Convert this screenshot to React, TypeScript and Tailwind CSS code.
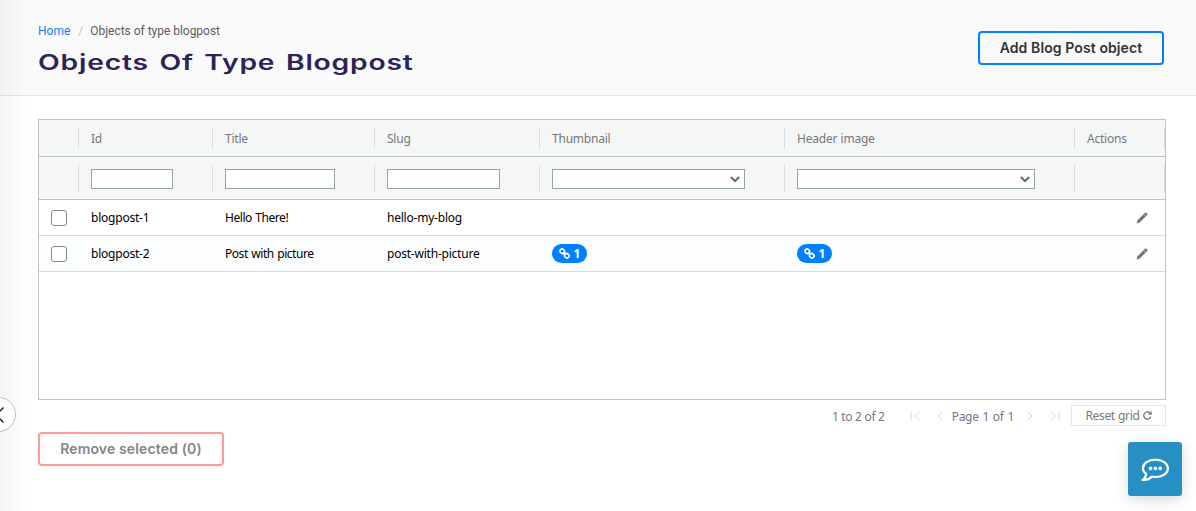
import React from "react";

type Column = { label: string; cell: string; filter?: string; select?: boolean };

const columns: Column[] = [
  { label: "", cell: "w-[40px]" },
  { label: "Id", cell: "w-[134px]", filter: "w-[82px]" },
  { label: "Title", cell: "w-[162px]", filter: "w-[110px]" },
  { label: "Slug", cell: "w-[165px]", filter: "w-[113px]" },
  { label: "Thumbnail", cell: "w-[245px]", filter: "w-[193px]", select: true },
  { label: "Header image", cell: "w-[290px]", filter: "w-[238px]", select: true },
  { label: "Actions", cell: "w-[90px]" },
];

const rows = [
  { id: "blogpost-1", title: "Hello There!", slug: "hello-my-blog", images: 0 },
  { id: "blogpost-2", title: "Post with picture", slug: "post-with-picture", images: 1 },
];

function Chevron({ d, className }: { d: string; className: string }) {
  return (
    <svg className={className} viewBox="0 0 10 10" fill="none" stroke="currentColor">
      <path d={d} />
    </svg>
  );
}

function Badge({ count }: { count: number }) {
  return (
    <span className="flex h-[19px] w-[35px] items-center justify-center gap-[4px] rounded-full bg-[#0080ff] text-[12px] font-bold tracking-normal text-white">
      <svg className="h-[11px] w-[11px]" viewBox="0 0 12 12" fill="none" stroke="currentColor" strokeWidth="1.8">
        <rect x="1" y="1.4" width="5.2" height="4.4" rx="2" transform="rotate(45 3.6 3.6)" />
        <rect x="5.8" y="6.2" width="5.2" height="4.4" rx="2" transform="rotate(45 8.4 8.4)" />
        <path d="M4.4 4.4l3.2 3.2" />
      </svg>
      {count}
    </span>
  );
}

export default function App() {
  return (
    <div className="relative h-[511px] w-full overflow-hidden bg-white font-['Noto_Sans',sans-serif] text-[12px]">
      <header className="flex h-24 items-start justify-between border-b border-[#e5e6e8] bg-[#fafafa] pr-8 pl-[38px]">
        <div className="pt-[22px]">
          <nav className="flex h-[18px] items-center font-['Roboto',sans-serif] text-[12px] text-[#5c5c5c]">
            <a className="text-[#0d80ff]">Home</a>
            <span className="mr-[7px] ml-[8px] text-[#c4c4c4]">/</span>
            <span className="tracking-[-0.02px]">Objects of type blogpost</span>
          </nav>
          <h1 className="mt-[8px] origin-left scale-x-[1.345] font-['Inter',sans-serif] text-[21px] leading-[30px] font-semibold tracking-[0.6px] whitespace-nowrap text-[#2b2459] [word-spacing:2px]">
            Objects Of Type Blogpost
          </h1>
        </div>
        <button className="mt-[31px] h-[34px] w-[186px] rounded-[4px] border-2 border-[#0080ff] pb-[2px] font-['Inter',sans-serif] text-[14px] font-semibold tracking-[0.1px] text-[#333]">
          Add Blog Post object
        </button>
      </header>

      <main className="pt-[23px] pr-[30px] pl-[38px]">
        <section className="h-[281px] border border-[#bdc3c7]">
          <div className="flex h-[37px] border-b border-[#bdc3c7] bg-[#f5f7f7] tracking-[-0.22px] text-[#757778] [word-spacing:0.5px]">
            {columns.map((c, i) => (
              <div key={i} className={`flex items-center justify-between pl-3 ${c.cell}`}>
                <span className="pt-[2px] whitespace-nowrap">{c.label}</span>
                <i className="h-5 w-px bg-[#d8dbdd]" />
              </div>
            ))}
          </div>
          <div className="flex h-[43px] border-b border-[#bdc3c7] bg-[#f5f7f7]">
            {columns.map((c, i) => (
              <div key={i} className={`flex items-center justify-between pl-3 ${c.cell}`}>
                {c.filter ? (
                  <div className={`mt-px flex h-5 items-center justify-end border border-[#95a5a6] bg-white pr-1 ${c.filter}`}>
                    {c.select && (
                      <Chevron d="M0.8 3l4.2 4 4.2-4" className="h-[10px] w-[10px] stroke-2 text-[#6b6b6b]" />
                    )}
                  </div>
                ) : (
                  <span />
                )}
                <i className="h-[27px] w-px bg-[#d8dbdd]" />
              </div>
            ))}
          </div>
          {rows.map((r, i) => (
            <div key={r.id} className={`flex h-9 items-center border-b border-[#d9dcde] tracking-[-0.22px] text-black ${i ? "bg-[#fcfdfe]" : "bg-white"}`}>
              <div className="w-[40px] pl-3">
                <div className="h-4 w-4 rounded-[3px] border border-[#7f8c8d] bg-white" />
              </div>
              <div className="w-[134px] pt-px pl-3">{r.id}</div>
              <div className="w-[162px] pt-px pl-3 tracking-[-0.45px] [word-spacing:0.8px]">{r.title}</div>
              <div className="w-[165px] pt-px pl-3">{r.slug}</div>
              <div className="w-[245px] pl-3">{r.images > 0 && <Badge count={r.images} />}</div>
              <div className="w-[290px] pl-3">{r.images > 0 && <Badge count={r.images} />}</div>
              <div className="flex w-[90px] justify-end pr-[17px]">
                <svg className="h-3 w-3 text-[#757575]" viewBox="0 0 12 12" fill="currentColor">
                  <path d="M.6 11.4l.9-3.1 6-6 2.2 2.2-6 6zM7.7 2.1l1.3-1.3q.7-.6 1.4 0l.8.8q.6.7 0 1.4l-1.3 1.3z" />
                </svg>
              </div>
            </div>
          ))}
        </section>

        <div className="flex h-8 items-center justify-end text-[#757778]">
          <span className="mr-[25px] pt-[2px] tracking-[-0.3px]">1 to 2 of 2</span>
          <Chevron d="M1 1v8M9 1L5 5l4 4" className="mr-[15px] h-[10px] w-[10px] text-[#d5d7d8]" />
          <Chevron d="M7 1L3 5l4 4" className="mr-[7px] h-[10px] w-[10px] text-[#d5d7d8]" />
          <span className="pt-[2px] tracking-[-0.3px] [word-spacing:1px]">Page 1 of 1</span>
          <Chevron d="M3 1l4 4-4 4" className="mr-[15px] ml-[11px] h-[10px] w-[10px] text-[#d5d7d8]" />
          <Chevron d="M1 1l4 4-4 4M9 1v8" className="mr-[11px] h-[10px] w-[10px] text-[#d5d7d8]" />
          <button className="-mt-px flex h-[21px] w-[95px] items-center justify-center gap-[3px] border border-[#e4e6e7]">
            <span className="tracking-[-0.35px] [word-spacing:0.5px]">Reset grid</span>
            <svg className="h-[9px] w-[9px]" viewBox="0 0 9 9" fill="none" stroke="currentColor" strokeWidth="1.3">
              <path d="M7.8 5.7A3.6 3.6 0 1 1 7 2" />
              <path d="M8.7 0v3.8H4.9z" fill="currentColor" stroke="none" />
            </svg>
          </button>
        </div>

        <button className="block h-[34px] w-[186px] rounded-[4px] border-2 border-[#ff9994] pb-[2px] font-['Inter',sans-serif] text-[14px] font-semibold tracking-[0.14px] text-[#858585]">
          Remove selected (0)
        </button>
      </main>

      <div className="absolute top-0 left-0 h-full w-7 bg-linear-to-r from-black/4 to-transparent" />
      <button className="absolute top-[397px] left-[-19px] flex h-[35px] w-[35px] items-center justify-center rounded-full border border-[#bdbdc1] bg-white">
        <svg className="h-4 w-4" viewBox="0 0 16 16" fill="none" stroke="#222" strokeWidth="1.5">
          <path d="M12.5 0.5L5 8l7.5 7.5" />
        </svg>
      </button>
      <button className="absolute top-[442px] left-[1128px] flex h-[54px] w-[54px] items-center justify-center rounded-[3px] bg-[#278fc3] shadow-[0_4px_14px_rgba(0,0,0,0.15)]">
        <svg className="mt-px h-6 w-7" viewBox="0 0 28 24" fill="none" stroke="white" strokeWidth="2.2">
          <path d="M5.2 15.8C3.2 14.3 1.9 12.5 1.9 10.4 1.9 5.3 7.5 1.7 14.4 1.7S27 5.5 27 10.4 21.4 19 14.4 19q-1.8 0-3.4-.4-4.1 3.8-9.4 3.2 3.4-2.4 3.6-6z" strokeLinejoin="round" />
          <g fill="white" stroke="none">
            <circle cx="9.6" cy="10.4" r="1.8" />
            <circle cx="14.4" cy="10.4" r="1.8" />
            <circle cx="19.2" cy="10.4" r="1.8" />
          </g>
        </svg>
      </button>
    </div>
  );
}
